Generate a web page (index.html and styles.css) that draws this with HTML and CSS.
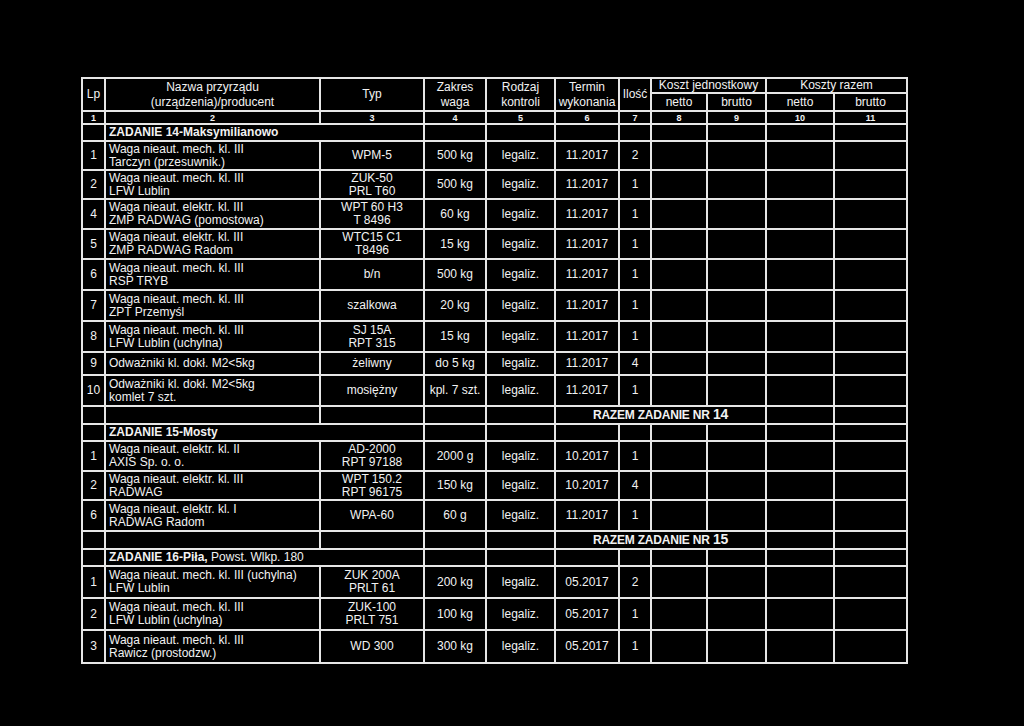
FILE: index.html
```html
<!DOCTYPE html>
<html lang="pl">
<head>
<meta charset="utf-8">
<title>Zadania</title>
<link rel="stylesheet" href="styles.css">
</head>
<body>
<div class="page">
<table class="grid">
  <colgroup>
    <col class="c-lp"><col class="c-name"><col class="c-typ"><col class="c-zak"><col class="c-rodz"><col class="c-term"><col class="c-il"><col class="c-n1"><col class="c-b1"><col class="c-n2"><col class="c-b2">
  </colgroup>
  <thead>
    <tr class="h-top">
      <th rowspan="2">Lp</th>
      <th rowspan="2" class="two">Nazwa przyrządu<br>(urządzenia)/producent</th>
      <th rowspan="2">Typ</th>
      <th rowspan="2" class="two">Zakres<br>waga</th>
      <th rowspan="2" class="two">Rodzaj<br>kontroli</th>
      <th rowspan="2" class="two">Termin<br>wykonania</th>
      <th rowspan="2">Ilość</th>
      <th colspan="2">Koszt jednostkowy</th>
      <th colspan="2">Koszty razem</th>
    </tr>
    <tr class="h-sub">
      <th>netto</th><th>brutto</th><th>netto</th><th>brutto</th>
    </tr>
    <tr class="nums">
      <td>1</td><td>2</td><td>3</td><td>4</td><td>5</td><td>6</td><td>7</td><td>8</td><td>9</td><td>10</td><td>11</td>
    </tr>
  </thead>
  <tbody>
    <tr class="sec"><td></td><td colspan="2" class="name"><b>ZADANIE 14-Maksymilianowo</b></td><td></td><td></td><td></td><td></td><td></td><td></td><td></td><td></td></tr>
    <tr class="r29"><td>1</td><td class="name">Waga nieaut. mech. kl. III<br>Tarczyn (przesuwnik.)</td><td>WPM-5</td><td>500 kg</td><td>legaliz.</td><td>11.2017</td><td>2</td><td></td><td></td><td></td><td></td></tr>
    <tr class="r29"><td>2</td><td class="name">Waga nieaut. mech. kl. III<br>LFW Lublin</td><td>ZUK-50<br>PRL T60</td><td>500 kg</td><td>legaliz.</td><td>11.2017</td><td>1</td><td></td><td></td><td></td><td></td></tr>
    <tr class="r30"><td>4</td><td class="name">Waga nieaut. elektr. kl. III<br>ZMP RADWAG (pomostowa)</td><td>WPT 60 H3<br>T 8496</td><td>60 kg</td><td>legaliz.</td><td>11.2017</td><td>1</td><td></td><td></td><td></td><td></td></tr>
    <tr class="r30"><td>5</td><td class="name">Waga nieaut. elektr. kl. III<br>ZMP RADWAG Radom</td><td>WTC15 C1<br>T8496</td><td>15 kg</td><td>legaliz.</td><td>11.2017</td><td>1</td><td></td><td></td><td></td><td></td></tr>
    <tr class="r31"><td>6</td><td class="name">Waga nieaut. mech. kl. III<br>RSP TRYB</td><td>b/n</td><td>500 kg</td><td>legaliz.</td><td>11.2017</td><td>1</td><td></td><td></td><td></td><td></td></tr>
    <tr class="r31"><td>7</td><td class="name">Waga nieaut. mech. kl. III<br>ZPT Przemyśl</td><td>szalkowa</td><td>20 kg</td><td>legaliz.</td><td>11.2017</td><td>1</td><td></td><td></td><td></td><td></td></tr>
    <tr class="r31"><td>8</td><td class="name">Waga nieaut. mech. kl. III<br>LFW Lublin (uchylna)</td><td>SJ 15A<br>RPT 315</td><td>15 kg</td><td>legaliz.</td><td>11.2017</td><td>1</td><td></td><td></td><td></td><td></td></tr>
    <tr class="r23"><td>9</td><td class="name">Odważniki kl. dokł. M2&lt;5kg</td><td>żeliwny</td><td>do 5 kg</td><td>legaliz.</td><td>11.2017</td><td>4</td><td></td><td></td><td></td><td></td></tr>
    <tr class="r31"><td>10</td><td class="name">Odważniki kl. dokł. M2&lt;5kg<br>komlet 7 szt.</td><td>mosiężny</td><td>kpl. 7 szt.</td><td>legaliz.</td><td>11.2017</td><td>1</td><td></td><td></td><td></td><td></td></tr>
    <tr class="tot"><td></td><td></td><td></td><td></td><td></td><td colspan="4" class="sum">RAZEM ZADANIE NR <span class="big">14</span></td><td></td><td></td></tr>
    <tr class="sec"><td></td><td colspan="2" class="name"><b>ZADANIE 15-Mosty</b></td><td></td><td></td><td></td><td></td><td></td><td></td><td></td><td></td></tr>
    <tr class="r30"><td>1</td><td class="name">Waga nieaut. elektr. kl. II<br>AXIS Sp. o. o.</td><td>AD-2000<br>RPT 97188</td><td>2000 g</td><td>legaliz.</td><td>10.2017</td><td>1</td><td></td><td></td><td></td><td></td></tr>
    <tr class="r29"><td>2</td><td class="name">Waga nieaut. elektr. kl. III<br>RADWAG</td><td>WPT 150.2<br>RPT 96175</td><td>150 kg</td><td>legaliz.</td><td>10.2017</td><td>4</td><td></td><td></td><td></td><td></td></tr>
    <tr class="r31"><td>6</td><td class="name">Waga nieaut. elektr. kl. I<br>RADWAG Radom</td><td>WPA-60</td><td>60 g</td><td>legaliz.</td><td>11.2017</td><td>1</td><td></td><td></td><td></td><td></td></tr>
    <tr class="tot"><td></td><td></td><td></td><td></td><td></td><td colspan="4" class="sum">RAZEM ZADANIE NR <span class="big">15</span></td><td></td><td></td></tr>
    <tr class="sec"><td></td><td colspan="2" class="name"><b>ZADANIE 16-Piła,</b> Powst. Wlkp. 180</td><td></td><td></td><td></td><td></td><td></td><td></td><td></td><td></td></tr>
    <tr class="r32"><td>1</td><td class="name">Waga nieaut. mech. kl. III (uchylna)<br>LFW Lublin</td><td>ZUK 200A<br>PRLT 61</td><td>200 kg</td><td>legaliz.</td><td>05.2017</td><td>2</td><td></td><td></td><td></td><td></td></tr>
    <tr class="r32"><td>2</td><td class="name">Waga nieaut. mech. kl. III<br>LFW Lublin (uchylna)</td><td>ZUK-100<br>PRLT 751</td><td>100 kg</td><td>legaliz.</td><td>05.2017</td><td>1</td><td></td><td></td><td></td><td></td></tr>
    <tr class="r33"><td>3</td><td class="name">Waga nieaut. mech. kl. III<br>Rawicz (prostodzw.)</td><td>WD 300</td><td>300 kg</td><td>legaliz.</td><td>05.2017</td><td>1</td><td></td><td></td><td></td><td></td></tr>
  </tbody>
</table>
</div>
</body>
</html>
```

FILE: styles.css
```css
html, body {
  margin: 0;
  padding: 0;
  background: #000;
}
.page {
  width: 1024px;
  height: 726px;
  background: #000;
  padding: 77px 0 0 81px;
  box-sizing: border-box;
  font-family: "Liberation Sans", Arial, sans-serif;
  color: #f2f2f2;
}
.grid {
  border-collapse: collapse;
  table-layout: fixed;
  width: 827px;
  font-size: 12px;
  line-height: 13px;
}
.grid td, .grid th {
  border: 2px solid #e6e6e6;
  padding: 0 2px;
  text-align: center;
  vertical-align: middle;
  font-weight: normal;
  white-space: nowrap;
  overflow: hidden;
}
.c-lp { width: 23px; }
.c-name { width: 215px; }
.c-typ { width: 104px; }
.c-zak { width: 62px; }
.c-rodz { width: 69px; }
.c-term { width: 64px; }
.c-il { width: 32px; }
.c-n1 { width: 56px; }
.c-b1 { width: 59px; }
.c-n2 { width: 68px; }
.c-b2 { width: 73px; }

.grid th.two { line-height: 15px; }
.h-top th { height: 13px; }
.h-sub th { height: 16px; line-height: 14px; }
.grid .nums td {
  height: 11px;
  font-size: 9px;
  line-height: 10px;
  font-weight: bold;
}
.grid td.name { text-align: left; padding-left: 3px; }
.sec td { height: 15px; line-height: 15px; }
.tot td { height: 16px; }
.grid td.sum { font-weight: bold; letter-spacing: -0.2px; }
.sum .big { font-size: 14px; }
.r23 td { height: 21px; }
.r29 td { height: 27px; }
.r30 td { height: 28px; }
.r31 td { height: 29px; }
.r32 td { height: 30px; }
.r33 td { height: 31px; }
```
